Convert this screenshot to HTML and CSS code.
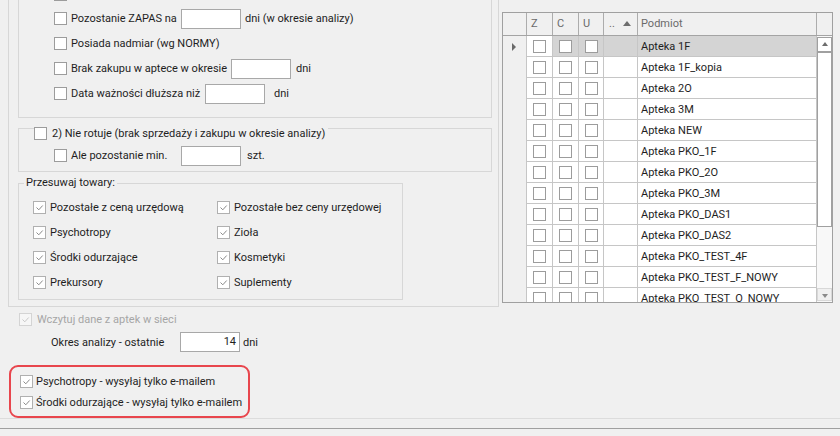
FILE: index.html
```html
<!DOCTYPE html>
<html>
<head>
	<title>Przesunięcia towarów</title>
	<meta charset="utf-8"/>
	<link rel="stylesheet" href="styles.css">
</head>
<body>
	<div class="top">
		<div class="frame">
			<div class="group g1">
				<div class="row first"><span class="cb"></span></div>
				<div class="row"><span class="cb"></span><span class="lbl w110">Pozostanie ZAPAS na</span><span class="edit"></span><span class="suf m4">dni (w okresie analizy)</span></div>
				<div class="row"><span class="cb"></span><span class="lbl">Posiada nadmiar (wg NORMY)</span></div>
				<div class="row"><span class="cb"></span><span class="lbl w160">Brak zakupu w aptece w okresie</span><span class="edit"></span><span class="suf m5">dni</span></div>
				<div class="row"><span class="cb"></span><span class="lbl w134">Data ważności dłuższa niż</span><span class="edit"></span><span class="suf m9">dni</span></div>
			</div>
			<div class="group g2">
				<div class="legend"><span class="cb"></span><span class="lbl">2) Nie rotuje (brak sprzedaży i zakupu w okresie analizy)</span></div>
				<div class="row"><span class="cb"></span><span class="lbl w110">Ale pozostanie min.</span><span class="edit"></span><span class="suf m6">szt.</span></div>
			</div>
			<div class="group g3">
				<div class="title">Przesuwaj towary:</div>
				<div class="checks">
					<div class="row"><span class="cb on"><svg viewBox="0 0 11 11"><path d="M2.5 5.5l2.3 2.3 3.9-4.3"/></svg></span><span class="lbl">Pozostałe z ceną urzędową</span></div>
					<div class="row"><span class="cb on"><svg viewBox="0 0 11 11"><path d="M2.5 5.5l2.3 2.3 3.9-4.3"/></svg></span><span class="lbl">Pozostałe bez ceny urzędowej</span></div>
					<div class="row"><span class="cb on"><svg viewBox="0 0 11 11"><path d="M2.5 5.5l2.3 2.3 3.9-4.3"/></svg></span><span class="lbl">Psychotropy</span></div>
					<div class="row"><span class="cb on"><svg viewBox="0 0 11 11"><path d="M2.5 5.5l2.3 2.3 3.9-4.3"/></svg></span><span class="lbl">Zioła</span></div>
					<div class="row"><span class="cb on"><svg viewBox="0 0 11 11"><path d="M2.5 5.5l2.3 2.3 3.9-4.3"/></svg></span><span class="lbl">Środki odurzające</span></div>
					<div class="row"><span class="cb on"><svg viewBox="0 0 11 11"><path d="M2.5 5.5l2.3 2.3 3.9-4.3"/></svg></span><span class="lbl">Kosmetyki</span></div>
					<div class="row"><span class="cb on"><svg viewBox="0 0 11 11"><path d="M2.5 5.5l2.3 2.3 3.9-4.3"/></svg></span><span class="lbl">Prekursory</span></div>
					<div class="row"><span class="cb on"><svg viewBox="0 0 11 11"><path d="M2.5 5.5l2.3 2.3 3.9-4.3"/></svg></span><span class="lbl">Suplementy</span></div>
				</div>
			</div>
		</div>

		<div class="grid">
			<div class="ghead">
				<div class="hc"></div>
				<div class="hc">Z</div>
				<div class="hc">C</div>
				<div class="hc">U</div>
				<div class="hc dots">..<span class="sort"></span></div>
				<div class="hc name">Podmiot</div>
				<div class="hc last"></div>
			</div>
			<div class="gbody">
				<div class="rows">
					<div class="gr"><div class="gc ind"><span class="ptr"></span></div><div class="gc ck"><span class="cb"></span></div><div class="gc ck hi"><span class="cb"></span></div><div class="gc ck hi"><span class="cb"></span></div><div class="gc hi"></div><div class="gc name hi">Apteka 1F</div></div>
					<div class="gr"><div class="gc ind"></div><div class="gc ck"><span class="cb"></span></div><div class="gc ck"><span class="cb"></span></div><div class="gc ck"><span class="cb"></span></div><div class="gc"></div><div class="gc name">Apteka 1F_kopia</div></div>
					<div class="gr"><div class="gc ind"></div><div class="gc ck"><span class="cb"></span></div><div class="gc ck"><span class="cb"></span></div><div class="gc ck"><span class="cb"></span></div><div class="gc"></div><div class="gc name">Apteka 2O</div></div>
					<div class="gr"><div class="gc ind"></div><div class="gc ck"><span class="cb"></span></div><div class="gc ck"><span class="cb"></span></div><div class="gc ck"><span class="cb"></span></div><div class="gc"></div><div class="gc name">Apteka 3M</div></div>
					<div class="gr"><div class="gc ind"></div><div class="gc ck"><span class="cb"></span></div><div class="gc ck"><span class="cb"></span></div><div class="gc ck"><span class="cb"></span></div><div class="gc"></div><div class="gc name">Apteka NEW</div></div>
					<div class="gr"><div class="gc ind"></div><div class="gc ck"><span class="cb"></span></div><div class="gc ck"><span class="cb"></span></div><div class="gc ck"><span class="cb"></span></div><div class="gc"></div><div class="gc name">Apteka PKO_1F</div></div>
					<div class="gr"><div class="gc ind"></div><div class="gc ck"><span class="cb"></span></div><div class="gc ck"><span class="cb"></span></div><div class="gc ck"><span class="cb"></span></div><div class="gc"></div><div class="gc name">Apteka PKO_2O</div></div>
					<div class="gr"><div class="gc ind"></div><div class="gc ck"><span class="cb"></span></div><div class="gc ck"><span class="cb"></span></div><div class="gc ck"><span class="cb"></span></div><div class="gc"></div><div class="gc name">Apteka PKO_3M</div></div>
					<div class="gr"><div class="gc ind"></div><div class="gc ck"><span class="cb"></span></div><div class="gc ck"><span class="cb"></span></div><div class="gc ck"><span class="cb"></span></div><div class="gc"></div><div class="gc name">Apteka PKO_DAS1</div></div>
					<div class="gr"><div class="gc ind"></div><div class="gc ck"><span class="cb"></span></div><div class="gc ck"><span class="cb"></span></div><div class="gc ck"><span class="cb"></span></div><div class="gc"></div><div class="gc name">Apteka PKO_DAS2</div></div>
					<div class="gr"><div class="gc ind"></div><div class="gc ck"><span class="cb"></span></div><div class="gc ck"><span class="cb"></span></div><div class="gc ck"><span class="cb"></span></div><div class="gc"></div><div class="gc name">Apteka PKO_TEST_4F</div></div>
					<div class="gr"><div class="gc ind"></div><div class="gc ck"><span class="cb"></span></div><div class="gc ck"><span class="cb"></span></div><div class="gc ck"><span class="cb"></span></div><div class="gc"></div><div class="gc name">Apteka PKO_TEST_F_NOWY</div></div>
					<div class="gr"><div class="gc ind"></div><div class="gc ck"><span class="cb"></span></div><div class="gc ck"><span class="cb"></span></div><div class="gc ck"><span class="cb"></span></div><div class="gc"></div><div class="gc name">Apteka PKO_TEST_O_NOWY</div></div>
				</div>
				<div class="vscroll">
					<div class="sb-up"><span class="tri-up"></span></div>
					<div class="sb-thumb"></div>
					<div class="sb-track"></div>
					<div class="sb-down"><span class="tri-down"></span></div>
				</div>
			</div>
		</div>
	</div>

	<div class="row wczytuj"><span class="cb off"><svg viewBox="0 0 11 11"><path d="M2.5 5.5l2.3 2.3 3.9-4.3"/></svg></span><span class="lbl">Wczytuj dane z aptek w sieci</span></div>
	<div class="row okres"><span class="lbl">Okres analizy - ostatnie</span><span class="edit num">14</span><span class="suf m3">dni</span></div>

	<div class="mark">
		<div class="row"><span class="cb on"><svg viewBox="0 0 11 11"><path d="M2.5 5.5l2.3 2.3 3.9-4.3"/></svg></span><span class="lbl">Psychotropy - wysyłaj tylko e-mailem</span></div>
		<div class="row"><span class="cb on"><svg viewBox="0 0 11 11"><path d="M2.5 5.5l2.3 2.3 3.9-4.3"/></svg></span><span class="lbl">Środki odurzające - wysyłaj tylko e-mailem</span></div>
	</div>
	<div class="sep-light"></div>
	<div class="sep-dark"></div>
</body>
</html>
```

FILE: styles.css
```css
body{
	margin: 0;
	width: 840px;
	height: 436px;
	overflow: hidden;
	background-color: #f0f0f0;
	font-family: Roboto, "Liberation Sans", sans-serif;
	font-size: 11px;
	color: #1e1e1e;
}
.top{
	display: flex;
	align-items: flex-start;
}

/* controls */
.row{
	display: flex;
	align-items: center;
	height: 25px;
	white-space: nowrap;
}
.cb{
	flex: none;
	display: flex;
	align-items: center;
	justify-content: center;
	width: 13px;
	height: 13px;
	box-sizing: border-box;
	border: 1px solid #9c9c9c;
	background-color: #fff;
}
.cb svg{
	width: 11px;
	height: 11px;
	fill: none;
	stroke: #8a8a8a;
	stroke-width: 1;
}
.cb.on{
	border-color: #b0b0b0;
}
.cb.off{
	border-color: #d4d4d4;
	background-color: #f6f6f6;
}
.cb.off svg{
	stroke: #c8c8c8;
}
.lbl{
	margin-left: 4px;
}
.w110{ width: 110px; }
.w134{ width: 134px; }
.w160{ width: 160px; }
.edit{
	flex: none;
	width: 60px;
	height: 20px;
	box-sizing: border-box;
	border: 1px solid #a8a8a8;
	background-color: #fff;
}
.m3{ margin-left: 3px; }
.m4{ margin-left: 4px; }
.m5{ margin-left: 5px; }
.m6{ margin-left: 6px; }
.m9{ margin-left: 9px; }

/* left frame */
.frame{
	flex: none;
	width: 491px;
	margin: -40px 0 0 8px;
	padding: 10px 6px 6px 9px;
	box-sizing: border-box;
	border: 1px solid #d7d7d7;
}
.group{
	border: 1px solid #d7d7d7;
	box-sizing: border-box;
}
.g1{
	width: 474px;
	padding: 10px 0 11px 35px;
}
.g1 .first{
	height: 24px;
}
.g2{
	width: 474px;
	margin-top: 10px;
	padding: 0 0 3px 35px;
}
.g2 .legend{
	display: flex;
	align-items: center;
	width: max-content;
	height: 13px;
	margin: -2px 0 0 -20px;
	padding-right: 3px;
	background-color: #f0f0f0;
}
.g2 .legend .lbl{
	margin-left: 5px;
}
.g2 .row{
	margin-top: 3px;
}
.g3{
	width: 385px;
	margin-top: 11px;
	padding: 0 0 4px 14px;
}
.g3 .title{
	width: max-content;
	height: 14px;
	line-height: 14px;
	margin: -8px 0 0 -9px;
	padding: 0 2px;
	background-color: #f0f0f0;
}
.checks{
	display: grid;
	grid-template-columns: 184px 1fr;
	margin-top: 5px;
}

/* grid */
.grid{
	flex: none;
	width: 331px;
	height: 291px;
	margin: 12px 0 0 3px;
	box-sizing: border-box;
	border: 1px solid #a0a0a0;
	overflow: hidden;
	background-color: #fff;
}
.ghead{
	display: grid;
	grid-template-columns: 24px 26px 26px 25px 34px 179px 15px;
	height: 23px;
	border-bottom: 1px solid #a4a4a4;
	box-sizing: border-box;
	background-color: #f0f0f0;
}
.hc{
	border-right: 1px solid #acacac;
	padding-left: 4px;
	line-height: 22px;
	color: #6a6a6a;
}
.hc.dots{
	padding-left: 5px;
}
.hc.name{
	padding-left: 3px;
}
.hc.last{
	border-right: none;
}
.sort{
	display: inline-block;
	vertical-align: middle;
	margin: -2px 0 0 8px;
	border-left: 4px solid transparent;
	border-right: 4px solid transparent;
	border-bottom: 5px solid #6d6d6d;
}
.gbody{
	display: flex;
	height: 266px;
}
.rows{
	width: 314px;
	overflow: hidden;
}
.gr{
	display: grid;
	grid-template-columns: 24px 26px 26px 25px 34px 179px;
	height: 21px;
}
.gc{
	display: flex;
	align-items: center;
	box-sizing: border-box;
	border-right: 1px solid #c6c6c6;
	border-bottom: 1px solid #c6c6c6;
	background-color: #fff;
}
.gc.ind{
	border-bottom: none;
	background-color: #f0f0f0;
}
.gc.ck{
	justify-content: center;
}
.gc.name{
	padding-left: 3px;
	white-space: nowrap;
}
.gc.hi{
	background-color: #d4d4d4;
}
.ptr{
	margin-left: 9px;
	border-top: 4px solid transparent;
	border-bottom: 4px solid transparent;
	border-left: 4px solid #6a6a6a;
}
.vscroll{
	display: flex;
	flex-direction: column;
	width: 15px;
	padding: 1px 0;
	box-sizing: border-box;
	background-color: #f8f8f8;
}
.sb-up{
	display: flex;
	align-items: center;
	justify-content: center;
	height: 16px;
	box-sizing: border-box;
	border: 1px solid #a0a0a0;
	border-bottom-width: 2px;
	background-color: #fff;
}
.tri-up{
	margin-top: -2px;
	border-left: 3px solid transparent;
	border-right: 3px solid transparent;
	border-bottom: 4px solid #6d6d6d;
}
.sb-thumb{
	height: 174px;
	box-sizing: border-box;
	border: 1px solid #a0a0a0;
	border-top: none;
	background-color: #fff;
}
.sb-track{
	flex: 1;
}
.sb-down{
	display: flex;
	align-items: center;
	justify-content: center;
	height: 13px;
	box-sizing: border-box;
	border: 1px solid #d8d8d8;
	background-color: #f0f0f0;
}
.tri-down{
	margin-top: 2px;
	border-left: 3px solid transparent;
	border-right: 3px solid transparent;
	border-top: 4px solid #8a8a8a;
}

/* bottom */
.wczytuj{
	padding-left: 19px;
	color: #a6a6a6;
}
.wczytuj .lbl{
	margin-left: 5px;
}
.okres{
	height: 20px;
	padding-left: 51px;
}
.okres .lbl{
	margin-left: 0;
	width: 129px;
}
.edit.num{
	text-align: right;
	padding-right: 3px;
	line-height: 18px;
}
.mark{
	width: 241px;
	height: 53px;
	margin: 13px 0 0 9px;
	padding: 4px 0 0 9px;
	box-sizing: border-box;
	border: 2px solid #e8464d;
	border-radius: 9px;
}
.mark .row{
	height: 21px;
}
.mark .lbl{
	margin-left: 3px;
}
.sep-light{
	height: 1px;
	background-color: #dcdcdc;
}
.sep-dark{
	height: 1px;
	margin-top: 9px;
	background-color: #a0a0a0;
}
```
